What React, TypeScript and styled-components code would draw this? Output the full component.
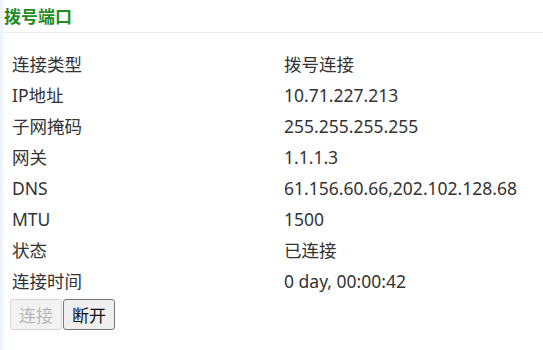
import React from "react";
import styled, { createGlobalStyle } from "styled-components";

const Global = createGlobalStyle`
  html, body { margin: 0; padding: 0; background: #fff; }
  body { font-family: "Noto Sans", "Noto Sans CJK SC", sans-serif; }
`;

const Page = styled.div`
  display: flex;
  min-height: 350px;
  width: 543px;
`;

const SideStrip = styled.div`
  width: 3px;
  background: #eef2f9;
  flex: none;
`;

const Panel = styled.div`
  flex: 1;
  display: flex;
  flex-direction: column;
`;

const Title = styled.div`
  height: 33px;
  box-sizing: border-box;
  border-bottom: 1px solid #ececec;
  padding-left: 1px;
  padding-bottom: 1px;
  display: flex;
  align-items: center;
  font-family: "Noto Sans CJK SC", sans-serif;
  font-weight: 700;
  font-size: 17px;
  color: #1f8a1f;
`;

const Table = styled.div`
  display: grid;
  grid-template-columns: 272px 1fr;
  grid-auto-rows: 31px;
  margin-top: 15px;
  padding-left: 9px;
  font-family: "Noto Sans", "Noto Sans CJK SC", sans-serif;
  font-size: 17.5px;
  color: #333;
`;

const Cell = styled.div`
  display: flex;
  align-items: center;
  white-space: nowrap;
`;

const Buttons = styled.div`
  display: flex;
  gap: 1px;
  padding-left: 7px;
  margin-top: 3px;
`;

const Btn = styled.button<{ $disabled?: boolean }>`
  width: 52px;
  height: 31px;
  box-sizing: border-box;
  padding: 0;
  font-family: "Noto Sans CJK SC", sans-serif;
  font-size: 17px;
  border-radius: 3px;
  border: 1px solid ${(p) => (p.$disabled ? "#d6d6d6" : "#767676")};
  background: ${(p) => (p.$disabled ? "#f2f2f2" : "#efefef")};
  color: ${(p) => (p.$disabled ? "#b8b8b8" : "#111")};
`;

const rows: [string, string][] = [
  ["连接类型", "拨号连接"],
  ["IP地址", "10.71.227.213"],
  ["子网掩码", "255.255.255.255"],
  ["网关", "1.1.1.3"],
  ["DNS", "61.156.60.66,202.102.128.68"],
  ["MTU", "1500"],
  ["状态", "已连接"],
  ["连接时间", "0 day, 00:00:42"],
];

export default function App() {
  return (
    <>
      <Global />
      <Page>
        <SideStrip />
        <Panel>
          <Title>拨号端口</Title>
          <Table>
            {rows.map(([k, v]) => (
              <React.Fragment key={k}>
                <Cell>{k}</Cell>
                <Cell>{v}</Cell>
              </React.Fragment>
            ))}
          </Table>
          <Buttons>
            <Btn $disabled disabled>
              连接
            </Btn>
            <Btn>断开</Btn>
          </Buttons>
        </Panel>
      </Page>
    </>
  );
}
